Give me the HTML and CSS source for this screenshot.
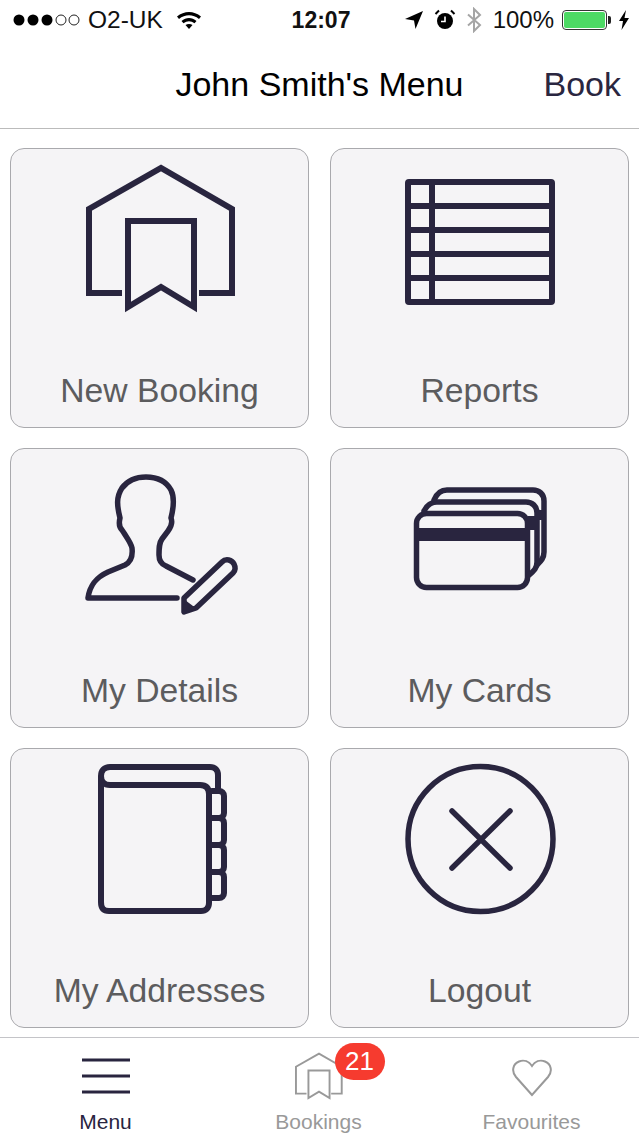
FILE: index.html
```html
<!DOCTYPE html>
<html lang="en">
<head>
<meta charset="utf-8">
<title>John Smith's Menu</title>
<link rel="stylesheet" href="styles.css">
</head>
<body>
<div class="app">
  <div class="status">
    <div class="status-side">
      <svg class="signal" viewBox="0 0 68 14" width="68" height="14"><g fill="#000"><circle cx="6" cy="7" r="5.5"/><circle cx="20" cy="7" r="5.5"/><circle cx="34" cy="7" r="5.5"/></g><g fill="none" stroke="#222" stroke-width="1"><circle cx="48" cy="7" r="5"/><circle cx="61" cy="7" r="5"/></g></svg>
      <span class="carrier">O2-UK</span>
      <svg class="wifi" viewBox="0 0 26 20" width="26" height="20"><path d="M1 6.5C8 .5 18 .5 25 6.5L23 9C17 4 9 4 3 9Z" fill="#000"/><path d="M5.500 11C10 7 16 7 20.500 11L18.500 13.300C15 10.500 11 10.500 7.500 13.300Z" fill="#000"/><path d="M9.500 15C11.500 13.500 14.500 13.500 16.500 15L13 19Z" fill="#000"/></svg>
    </div>
    <span class="time">12:07</span>
    <div class="status-side status-right">
      <svg class="st-icon" viewBox="0 0 20 20" width="20" height="20"><path d="M19 1 1 9l9 1.500L11.500 19Z" fill="#000"/></svg>
      <svg class="st-icon" viewBox="0 0 22 22" width="22" height="22"><circle cx="11" cy="12" r="8" fill="#000"/><path d="M11 7.500V12.500H7" fill="none" stroke="#fff" stroke-width="1.600"/><path d="M1.500 5 5 1.500M20.500 5 17 1.500" stroke="#000" stroke-width="2" fill="none"/></svg>
      <svg class="st-icon" viewBox="0 0 16 26" width="16" height="26"><path d="M2 7.500 14 18 8 24V2l6 6L2 18.500" fill="none" stroke="#a5a5a5" stroke-width="2"/></svg>
      <span class="battery-text">100%</span>
      <div class="battery"><div class="battery-fill"></div></div>
      <svg class="bolt" viewBox="0 0 12 20" width="12" height="20"><path d="M8 0 1 11h4L3.500 20 11 8H6.500Z" fill="#000"/></svg>
    </div>
  </div>

  <header class="nav">
    <h1 class="nav-title">John Smith's Menu</h1>
    <span class="nav-action">Book</span>
  </header>

  <main class="grid">
    <a class="tile">
      <svg class="tile-icon" viewBox="11 149 297 210">
        <path d="M122 293H89V209L161 168 232 209V293H199"/>
        <path d="M128 221H194V307L161 287 128 307Z"/>
      </svg>
      <span class="tile-label">New Booking</span>
    </a>
    <a class="tile">
      <svg class="tile-icon" viewBox="331 149 297 210">
        <rect x="408" y="182" width="144" height="120" rx="1"/>
        <path d="M408 206H552M408 230H552M408 254H552M408 278H552M432 182V302"/>
      </svg>
      <span class="tile-label">Reports</span>
    </a>
    <a class="tile">
      <svg class="tile-icon thin" viewBox="11 449 297 210">
        <path d="M177 598H88C90 584 97 577 108 572L125 565C131 562 133 557 132 548 131 543 127 538 124 533L122 530C119 527 119 522 120 518 117 506 116 497 122 488 128 480 136 477 146 477 158 477 166 481 171 490 175 498 173 510 171 518 173 523 171 527 168 531L162 539C159 543 159 548 159 555 159 561 161 564 166 566L193 580"/>
        <path d="M184 598 222 562C226 558 232 560 234 564 236 568 235 571 233 573L196 608 184 612Z"/>
        <path class="fill" d="M182 614 185 600 197 609Z"/>
      </svg>
      <span class="tile-label">My Details</span>
    </a>
    <a class="tile">
      <svg class="tile-icon thin" viewBox="331 449 297 210">
        <rect x="416.500" y="513.500" width="111" height="74" rx="10"/>
        <path class="fill" d="M416 528H528V541H416Z"/>
        <path d="M424 511C427 505 431 502 437 502H526C532 502 537 506 537 513V562C537 568 534 571 529 575"/>
        <path d="M434 500C437 493 441 490 447 490H533C539 490 544 494 544 501V552C544 558 541 561 537 565"/>
        <path class="fill" d="M528 516H537V530H528ZM537 510H544V520H537Z"/>
      </svg>
      <span class="tile-label">My Cards</span>
    </a>
    <a class="tile">
      <svg class="tile-icon thick" viewBox="11 749 297 210">
        <path d="M101 776V902C101 908 103 911 109 911H201C206 911 209 908 209 903V794C209 788 206 785 200 785H110C104 785 101 781 101 776 101 771 104 767 110 767H210C215 767 218 770 218 775V788"/>
        <path d="M212 791H219C222 791 224 793 224 796V813C224 816 222 818 219 818H212"/>
        <path d="M212 818H219C222 818 224 820 224 823V840C224 843 222 845 219 845H212"/>
        <path d="M212 845H219C222 845 224 847 224 850V867C224 870 222 872 219 872H212"/>
        <path d="M212 872H219C222 872 224 874 224 877V893C224 896 222 898 219 898H212"/>
      </svg>
      <span class="tile-label">My Addresses</span>
    </a>
    <a class="tile">
      <svg class="tile-icon thin" viewBox="331 749 297 210">
        <circle cx="480.500" cy="839" r="72.500"/>
        <path class="round" d="M452 811 510 868M510 811 452 868"/>
      </svg>
      <span class="tile-label">Logout</span>
    </a>
  </main>

  <nav class="tabs">
    <a class="tab tab-active">
      <svg class="tab-icon" viewBox="0 0 48 48" width="48" height="48"><path d="M0 8H48M0 24H48M0 40H48" fill="none" stroke="#29253f" stroke-width="3"/></svg>
      <span class="tab-label">Menu</span>
    </a>
    <a class="tab">
      <span class="tab-icon-wrap">
        <svg class="tab-icon" viewBox="84 163 154 150" width="50" height="48"><g fill="none" stroke="#999" stroke-width="6"><path d="M122 293H89V209L161 168 232 209V293H199"/><path d="M128 221H194V307L161 287 128 307Z"/></g></svg>
        <span class="badge">21</span>
      </span>
      <span class="tab-label">Bookings</span>
    </a>
    <a class="tab">
      <svg class="tab-icon" viewBox="0 0 40 48" width="40" height="48"><path d="M20 43 4 25C-1 19 1 12 7 9.500 12 7.500 17 9.500 20 14 23 9.500 28 7.500 33 9.500 39 12 41 19 36 25Z" fill="none" stroke="#999" stroke-width="2"/></svg>
      <span class="tab-label">Favourites</span>
    </a>
  </nav>
</div>
</body>
</html>
```

FILE: styles.css
```css
* { box-sizing: border-box; }
html, body { margin: 0; padding: 0; background: #fff; }
body { font-family: "Liberation Sans", Arial, sans-serif; color: #000; }
.app { width: 639px; height: 1136px; overflow: hidden; display: flex; flex-direction: column; }

.status { height: 40px; padding: 0 9px 0 13px; display: flex; align-items: center; justify-content: space-between; font-size: 24.500px; color: #111; }
.status-side { flex: 1 1 0; display: flex; align-items: center; }
.status-right { justify-content: flex-end; }
.signal { margin-right: 7px; }
.wifi { margin-left: 13px; }
.time { font-size: 23px; font-weight: 700; margin-right: 1px; }
.st-icon { margin-right: 10px; }
.battery-text { margin-right: 8px; font-size: 24px; margin-left: 1px; }
.battery { width: 45px; height: 20px; border: 1px solid #333; border-radius: 4px; padding: 1px; margin-right: 11px; position: relative; }
.battery::after { content: ""; position: absolute; right: -5px; top: 5px; width: 3px; height: 8px; background: #222; border-radius: 0 2px 2px 0; }
.battery-fill { height: 100%; background: #4cd964; border-radius: 2px; }

.nav { height: 89px; border-bottom: 1px solid #bbb; display: flex; align-items: center; justify-content: center; position: relative; }
.nav-title { margin: 0; font-size: 34px; font-weight: 400; }
.nav-action { position: absolute; right: 18px; top: 25px; font-size: 34px; color: #2a2640; }

.grid { display: grid; grid-template-columns: 299px 299px; grid-auto-rows: 280px; gap: 20px 21px; padding: 19px 10px 0; }
.tile { display: flex; flex-direction: column; align-items: center; background: #f5f4f6; border: 1px solid #a9a9ad; border-radius: 14px; }
.tile-icon { display: block; width: 297px; height: 210px; fill: none; stroke: #29253f; stroke-width: 6; }
.tile-icon.thin { stroke-width: 5.500; stroke-linejoin: round; stroke-linecap: round; }
.tile-icon.thick { stroke-width: 6; stroke-linejoin: round; stroke-linecap: round; }
.tile-icon .fill { fill: #29253f; stroke: none; }
.tile-icon .round { stroke-linecap: round; }
.tile-label { font-size: 33.700px; line-height: 40px; margin-top: 11px; color: #5c5c5e; }

.tabs { margin-top: 9px; height: 99px; border-top: 1px solid #c4c4c8; display: grid; grid-template-columns: 211px 215px 211px; }
.tab { display: flex; flex-direction: column; align-items: center; padding-top: 14px; color: #999; }
.tab-active { color: #29253f; }
.tab-icon { display: block; }
.tab-icon-wrap { position: relative; display: block; }
.badge { position: absolute; left: 41px; top: -9px; width: 50px; height: 37px; border-radius: 19px; background: #f63b2f; color: #fff; font-size: 26px; line-height: 37px; text-align: center; }
.tab-label { font-size: 21px; line-height: 24px; margin-top: 10px; }
```
